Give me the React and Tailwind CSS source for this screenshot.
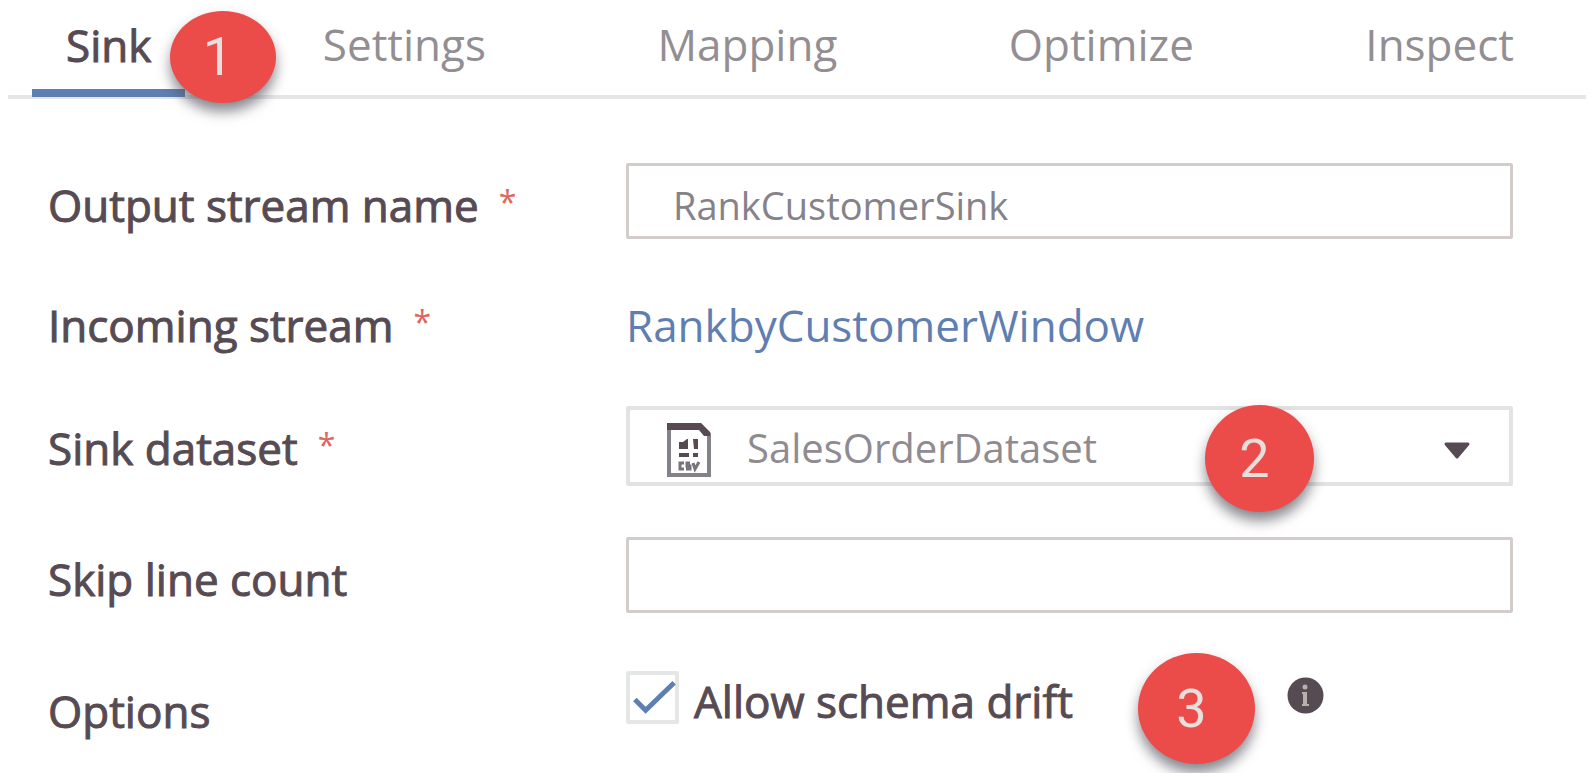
import React from "react";

function Badge({ number, className }) {
  return (
    <span
      className={`pointer-events-none absolute z-10 flex items-center justify-center rounded-[50%] bg-[#eb4c49] pr-2.5 font-[Roboto,sans-serif] text-[54px] leading-none font-normal text-[#e6dfdc] shadow-[0_10px_14px_-2px_rgba(80,80,90,0.65),0_5px_14px_rgba(90,90,100,0.2)] ${className}`}
    >
      {number}
    </span>
  );
}

function Tab({ children, active }) {
  return (
    <button
      type="button"
      role="tab"
      aria-selected={!!active}
      className={`border-b-8 px-[34px] pb-3.5 leading-[60px] ${
        active
          ? "border-[#5f7eb1] text-[#574b53] [-webkit-text-stroke:1px_#574b53]"
          : "border-transparent text-[#938e92]"
      }`}
    >
      {children}
    </button>
  );
}

function Asterisk() {
  return (
    <span className="text-[32px] leading-[54px] text-[#de6660] [-webkit-text-stroke:0]">*</span>
  );
}

const labelClass = "flex items-start gap-5 leading-[60px] [-webkit-text-stroke:1px_#574b53]";

function RowLabel({ htmlFor, required, children }) {
  return (
    <label htmlFor={htmlFor} className={`pt-3 ${labelClass}`}>
      {children}
      {required && <Asterisk />}
    </label>
  );
}

function DatasetIcon() {
  return (
    <svg
      className="pointer-events-none absolute top-4 left-10 h-14 w-[46px]"
      viewBox="0 0 46 56"
      fill="none"
      aria-hidden="true"
    >
      <path d="M3 3H34L43 12V53H3Z" fill="#fff" stroke="#858188" strokeWidth="4" />
      <path d="M1 1H35L44 10V14H38L33 8H1Z" fill="#574b53" />
      <g fill="#574b53">
        <path d="M13 20H17L21 17H22V27H13Z" />
        <path d="M27 17H32V27H28Z" />
        <path d="M13 31H23V35H13Z" />
        <path d="M27 31H32V35H27Z" />
      </g>
      <path
        d="M18 41H14V47H18M24 41H21V44H24V47H20M27 41L29 47L33 40"
        stroke="#77727c"
        strokeWidth="3"
      />
    </svg>
  );
}

const boxClass =
  "h-[76px] w-full rounded-[2px] border-[3px] border-[#d3ccca] bg-white px-[44px] pt-2 text-[38px] text-[#85828a] outline-none";

export default function App() {
  return (
    <main className="overflow-hidden bg-white pb-8 font-['Open_Sans',sans-serif] text-[44px] text-[#574b53]">
      <div className="mx-2 border-b-4 border-[#e5e7e6] pt-3">
        <div role="tablist" className="-mb-0.5 flex justify-between pr-[38px] pl-6">
          <div className="relative">
            <Tab active>Sink</Tab>
            <Badge number="1" className="-top-px left-[138px] h-[92px] w-[106px]" />
          </div>
          <Tab>Settings</Tab>
          <Tab>Mapping</Tab>
          <Tab>Optimize</Tab>
          <Tab>Inspect</Tab>
        </div>
      </div>

      <form className="flex flex-col gap-[51px] pt-16 pr-[81px] pl-12">
        <div className="grid grid-cols-[578px_1fr] items-start">
          <RowLabel htmlFor="stream-name" required>
            Output stream name
          </RowLabel>
          <input id="stream-name" type="text" defaultValue="RankCustomerSink" className={boxClass} />
        </div>

        <div className="grid grid-cols-[578px_1fr] items-start pt-[5px] leading-[60px]">
          <div className={labelClass}>
            Incoming stream
            <Asterisk />
          </div>
          <a href="#incoming" className="text-[#5f7eb1]">
            RankbyCustomerWindow
          </a>
        </div>

        <div className="grid grid-cols-[578px_1fr] items-start">
          <RowLabel htmlFor="dataset" required>
            Sink dataset
          </RowLabel>
          <div className="relative">
            <select
              id="dataset"
              className="block h-20 w-full appearance-none rounded-[2px] border-4 border-[#e3e3e2] bg-white pt-1 pl-[117px] text-[40px] text-[#8f8b90] outline-none"
            >
              <option>SalesOrderDataset</option>
            </select>
            <DatasetIcon />
            <svg
              className="pointer-events-none absolute top-9 right-[42px] h-[18px] w-7"
              viewBox="0 0 28 18"
              aria-hidden="true"
            >
              <path d="M3 2H25L14 15Z" fill="#574b53" stroke="#574b53" strokeWidth="3" strokeLinejoin="round" />
            </svg>
            <Badge number="2" className="-top-px right-[199px] h-[107px] w-[109px]" />
          </div>
        </div>

        <div className="grid grid-cols-[578px_1fr] items-start">
          <RowLabel htmlFor="skip-lines">Skip line count</RowLabel>
          <input id="skip-lines" type="text" className={boxClass} />
        </div>

        <div className="grid grid-cols-[578px_1fr] items-start pt-[7px]">
          <div className={`pt-2.5 ${labelClass}`}>Options</div>
          <div className="relative flex items-start">
            <input
              id="schema-drift"
              type="checkbox"
              defaultChecked
              className="peer h-[53px] w-[53px] shrink-0 appearance-none rounded-[2px] border-4 border-[#e5e7e6] bg-white"
            />
            <svg
              className="pointer-events-none absolute top-0 left-0 hidden h-[53px] w-[53px] peer-checked:block"
              viewBox="0 0 54 54"
              fill="none"
              aria-hidden="true"
            >
              <path d="M9 29L20 40L49 12" stroke="#5f7eb1" strokeWidth="5" />
            </svg>
            <label htmlFor="schema-drift" className={`pl-[15px] ${labelClass}`}>
              Allow schema drift
            </label>
            <Badge number="3" className="-top-[18px] left-[512px] h-[111px] w-[117px]" />
            <button type="button" aria-label="More information" className="absolute top-1.5 left-[661px]">
              <svg className="h-[37px] w-[37px]" viewBox="0 0 37 37" aria-hidden="true">
                <circle cx="18.5" cy="18.5" r="18" fill="#574b53" />
                <circle cx="18" cy="10" r="2.5" fill="#b9b0ae" />
                <path d="M15 15H20V27H22V29H15V27H16V17H15Z" fill="#b9b0ae" />
              </svg>
            </button>
          </div>
        </div>
      </form>
    </main>
  );
}
